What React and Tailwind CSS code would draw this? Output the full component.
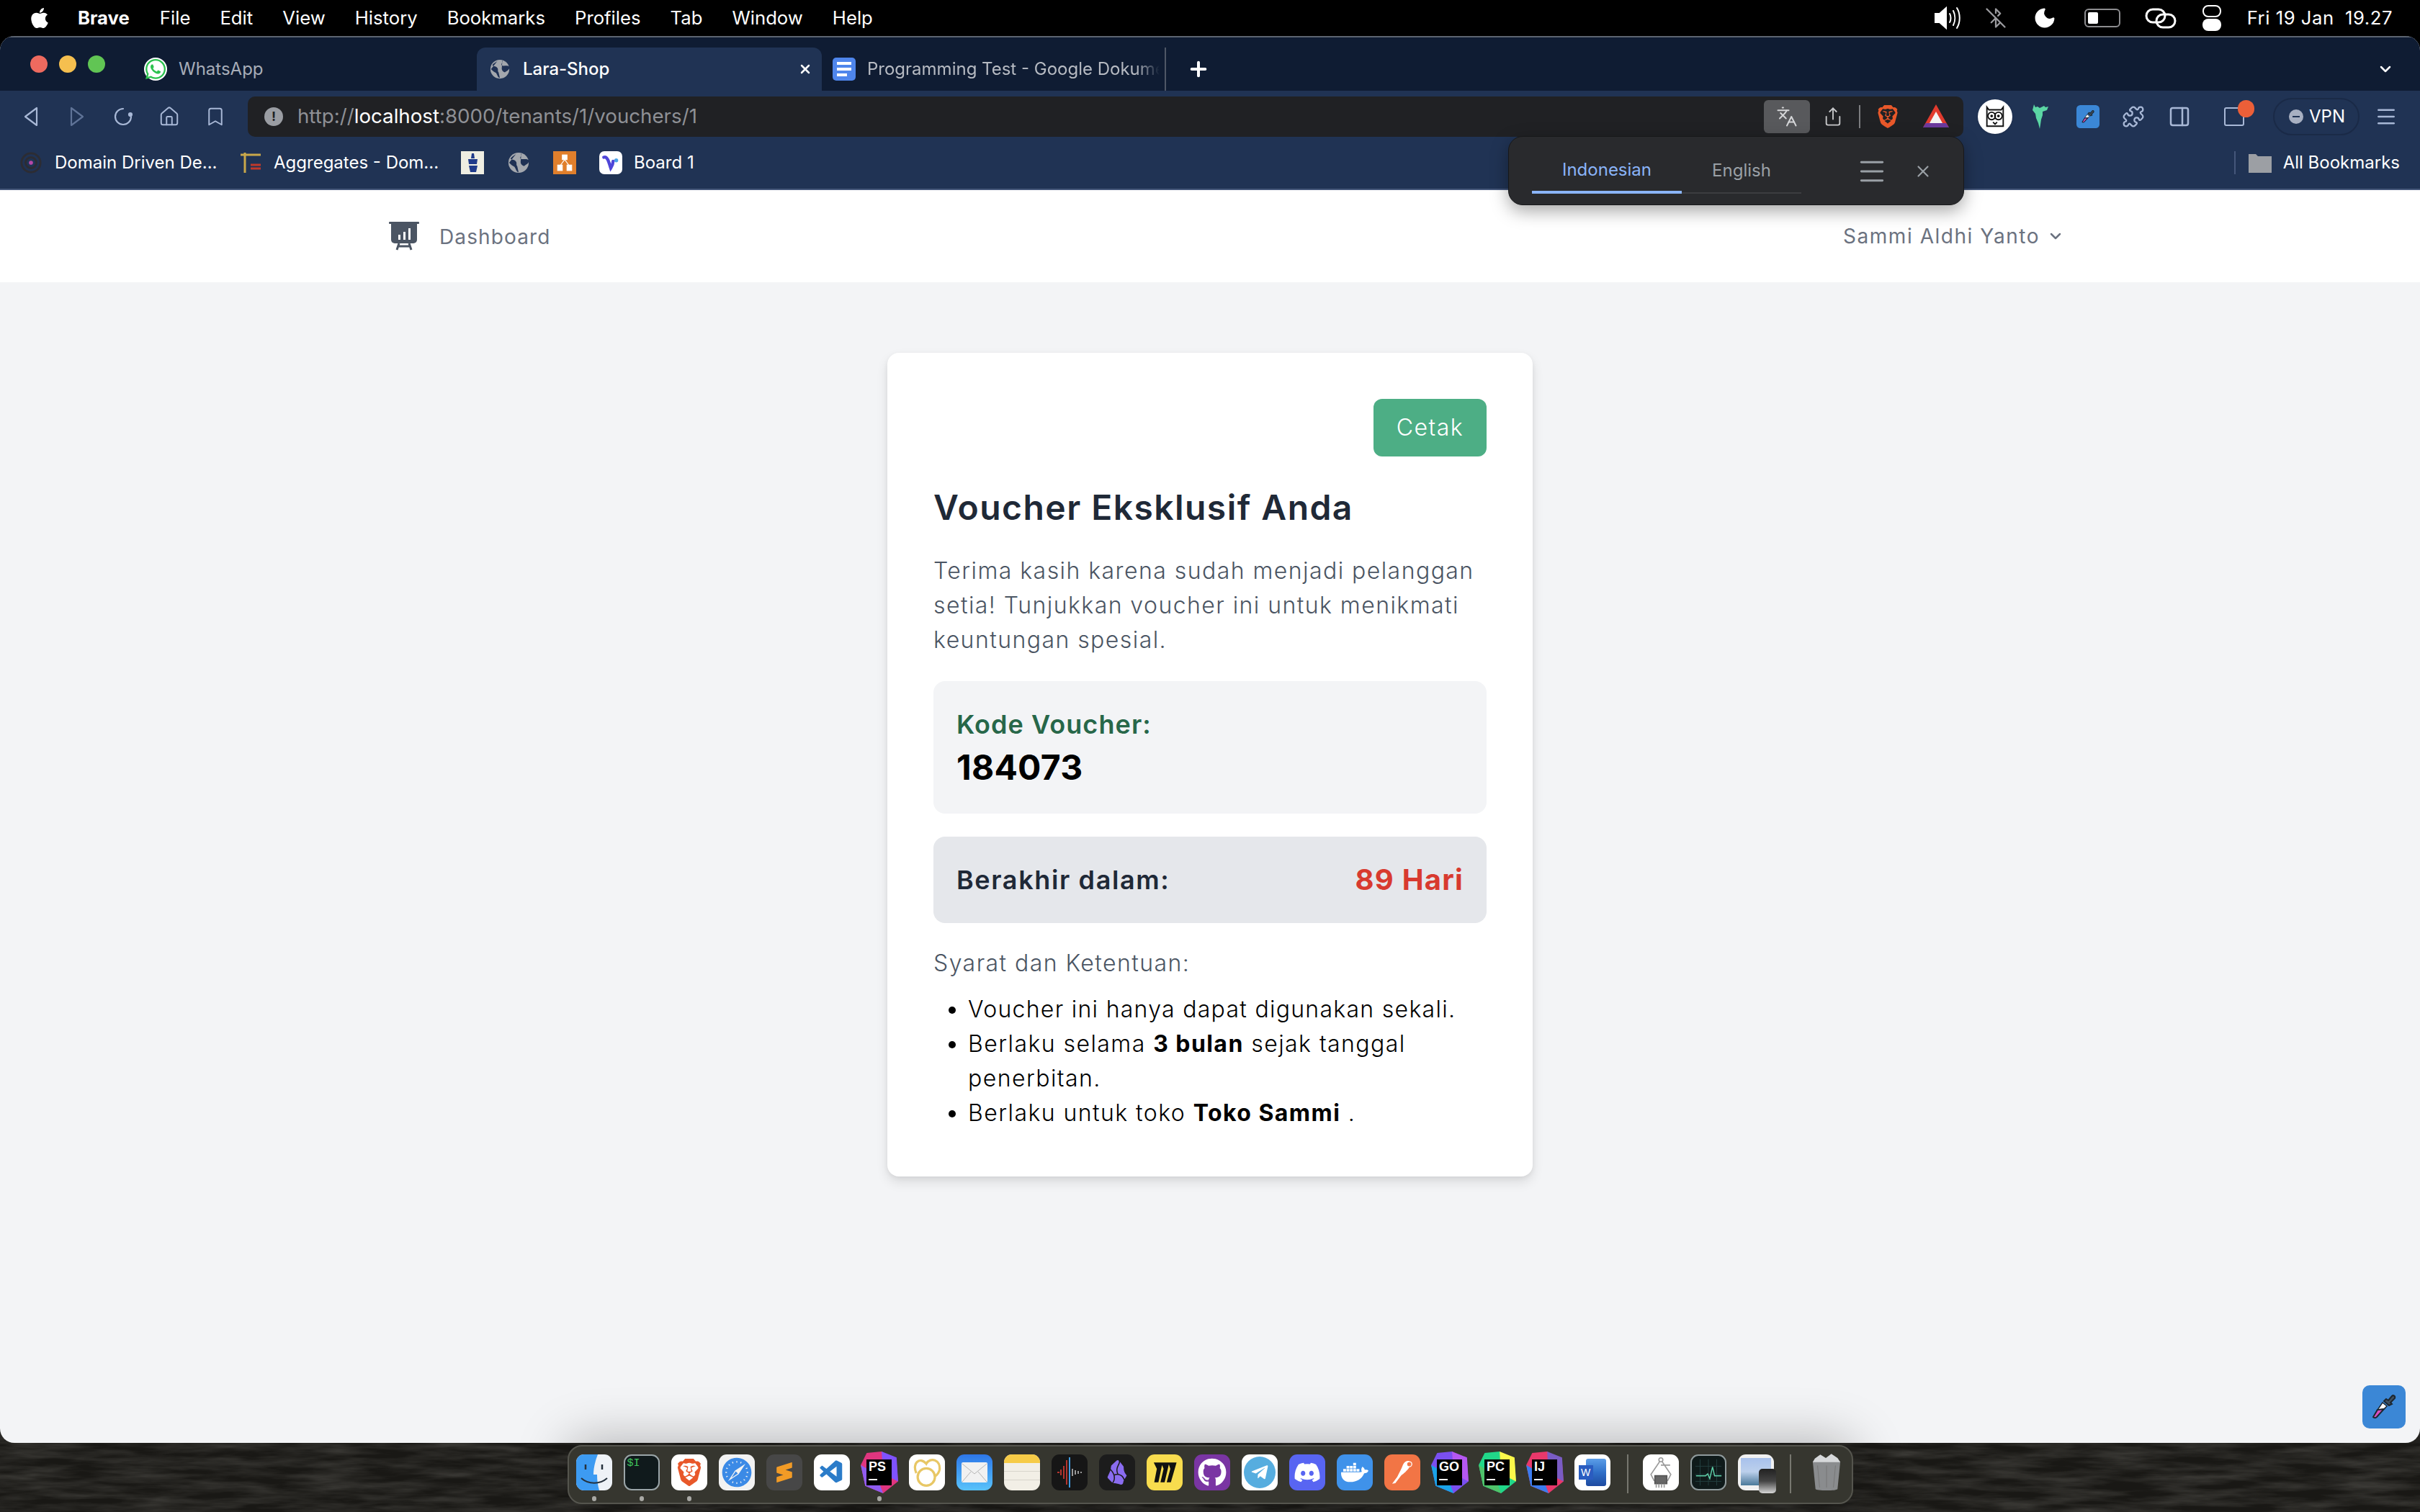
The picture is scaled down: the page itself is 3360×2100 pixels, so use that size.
import React from "react";
import { FaApple, FaWhatsapp, FaSafari, FaGithub, FaDiscord, FaDocker, FaTelegramPlane } from "react-icons/fa";
import { SiBrave, SiSublimetext, SiObsidian } from "react-icons/si";
import { VscVscode } from "react-icons/vsc";
import { ChevronDown, X, Plus, Languages, Share, PanelRight, Puzzle, Menu, BluetoothOff, Moon, Home, Bookmark } from "lucide-react";

const menuItems = ["File", "Edit", "View", "History", "Bookmarks", "Profiles", "Tab", "Window", "Help"];

const GlobeIcon = ({ className }) => (
  <svg viewBox="0 0 32 32" className={className}>
    <circle cx="16" cy="16" r="15" fill="#a3a7ad" />
    <path d="M13 2c-2 3-7 4-9 8 3 2 6 1 8 4 2 2 0 5 2 7l2 9c-3 0-4-5-6-8-3-1-6-4-8-6M20 2c2 3-3 5-1 8 3 2 8-1 12 2 1 5-3 6-7 9-3-1-5-3-5-6" fill="#1f3154" />
  </svg>
);

const Dropper = ({ className }) => (
  <svg viewBox="0 0 60 60" className={className}>
    <rect width="60" height="60" rx="10" fill="#3b87d6" />
    <path d="M36 21l5-6c2-2 5 0 4 3l-6 6 2 2-4 2-7-6 3-3z" fill="#3f5060" stroke="#1d2730" strokeWidth="2" />
    <path d="M28 24l6 5-4 4-9 1z" fill="#fff" stroke="#1d2730" strokeWidth="1.5" />
    <path d="M21 34l9-1-10 11c-2 2-4 1-5 0z" fill="#d94fc0" stroke="#1d2730" strokeWidth="2" />
  </svg>
);

const Tile = ({ bg, children }) => (
  <div className={`w-[50px] h-[50px] rounded-[11px] flex items-center justify-center overflow-hidden ${bg}`}>{children}</div>
);

const JetBrains = ({ label, colors }) => (
  <div className="w-[50px] h-[50px] relative flex items-center justify-center">
    <svg viewBox="0 0 50 56" className="absolute w-[54px] h-[58px]">
      <polygon points="8,2 28,0 48,14 50,40 30,56 6,46 0,18" fill={colors[0]} />
      <polygon points="28,0 48,8 50,40 30,30" fill={colors[1]} />
      <polygon points="0,18 20,30 30,56 6,46" fill={colors[2]} />
    </svg>
    <div className="relative w-[35px] h-[36px] bg-black text-white font-bold text-[18px] leading-[20px] pl-[3px] font-['Liberation_Sans',sans-serif]">
      {label}
      <div className="w-[12px] h-[2px] bg-white mt-[7px]" />
    </div>
  </div>
);

const dockApps = [
  { name: "finder", dot: true, node: (
    <div className="w-[50px] h-[50px] rounded-[11px] overflow-hidden relative bg-[#eef2f7]">
      <svg viewBox="0 0 50 50" className="w-full h-full">
        <path d="M0 0h30c-4 10-6 20-6 28h5c0 8 1 15 3 22H0z" fill="#3d9bf2" />
        <path d="M13 14v7M36 14v7" stroke="#26323d" strokeWidth="2.5" />
        <path d="M7 33c10 9 26 9 36 0" stroke="#26323d" strokeWidth="2" fill="none" />
      </svg>
    </div>
  ) },
  { name: "terminal", dot: true, node: (
    <div className="w-[50px] h-[50px] rounded-[11px] bg-[#101a1c] border-2 border-[#9aa5a8] text-[#3fc45c] text-[15px] font-['Liberation_Mono',monospace] pl-[3px] leading-[22px]">$I</div>
  ) },
  { name: "brave", dot: true, node: <Tile bg="bg-white"><SiBrave className="w-[38px] h-[42px] text-[#e8582a]" /></Tile> },
  { name: "safari", node: <Tile bg="bg-[#f2f2f2]"><FaSafari className="w-[42px] h-[42px] text-[#3b8ae6]" /></Tile> },
  { name: "sublime", node: <Tile bg="bg-[#474747]"><SiSublimetext className="w-[28px] h-[34px] text-[#f29b26]" /></Tile> },
  { name: "vscode", node: <Tile bg="bg-white"><VscVscode className="w-[38px] h-[38px] text-[#2b7cc9]" /></Tile> },
  { name: "phpstorm", dot: true, node: <JetBrains label="PS" colors={["#e0357f", "#7f52ff", "#8f5cf0"]} /> },
  { name: "navicat", node: (
    <Tile bg="bg-white">
      <svg viewBox="0 0 50 50" className="w-[46px] h-[46px]" fill="none" stroke="#e8c765" strokeWidth="3.5">
        <circle cx="24" cy="32" r="13" />
        <path d="M9 26C2 12 14 0 24 12c6-11 22-6 20 9-1 6-4 8-7 10" />
      </svg>
    </Tile>
  ) },
  { name: "mail", node: (
    <div className="w-[50px] h-[50px] rounded-[11px] bg-gradient-to-b from-[#2e76e8] to-[#5ac3fa] flex items-center justify-center">
      <svg viewBox="0 0 36 28" className="w-[36px] h-[28px]">
        <rect width="36" height="28" rx="2" fill="#f1f1f1" />
        <path d="M1 2l17 14L35 2M1 27l12-14M35 27L23 13" stroke="#b5b5b5" fill="none" />
      </svg>
    </div>
  ) },
  { name: "notes", node: (
    <div className="w-[50px] h-[50px] rounded-[11px] overflow-hidden bg-[#f2efe6] flex flex-col">
      <div className="h-[12px] bg-[#f6cb47]" />
      <div className="h-[1px] bg-[#d8d5cc] mt-[11px]" />
      <div className="h-[1px] bg-[#d8d5cc] mt-[11px]" />
    </div>
  ) },
  { name: "voice", node: (
    <Tile bg="bg-[#161616]">
      <svg viewBox="0 0 50 50" className="w-[50px] h-[50px]" strokeWidth="2">
        <path d="M8 25h3M13 21v8M17 16v18M21 8v34M25 14v22" stroke="#b5342e" />
        <path d="M29 20v10M33 22v6M37 23v4M41 24v2" stroke="#9a9a9a" />
        <path d="M25 4v42" stroke="#3f9be0" />
      </svg>
    </Tile>
  ) },
  { name: "obsidian", node: <Tile bg="bg-[#1c1c1c]"><SiObsidian className="w-[34px] h-[40px] text-[#8a6cf0]" /></Tile> },
  { name: "miro", node: (
    <Tile bg="bg-[#f8dc4e]">
      <svg viewBox="0 0 50 50" className="w-[36px] h-[36px]" fill="#111">
        <path d="M14 6h7l-8 38H5l5-26-6-12zM27 6h7l-9 38h-8l6-26-5-12zM41 6h7L37 44h-8l7-26-4-12z" />
      </svg>
    </Tile>
  ) },
  { name: "github", node: <Tile bg="bg-[#7a35a3]"><FaGithub className="w-[40px] h-[40px] text-white" /></Tile> },
  { name: "telegram", node: (
    <Tile bg="bg-white">
      <div className="w-[44px] h-[44px] rounded-full bg-[#56addf] flex items-center justify-center">
        <FaTelegramPlane className="w-[26px] h-[26px] text-white" />
      </div>
    </Tile>
  ) },
  { name: "discord", node: <Tile bg="bg-[#5865f2]"><FaDiscord className="w-[38px] h-[38px] text-white" /></Tile> },
  { name: "docker", node: <Tile bg="bg-[#3f92ea]"><FaDocker className="w-[38px] h-[38px] text-white" /></Tile> },
  { name: "postman", node: (
    <Tile bg="bg-[#f27545]">
      <svg viewBox="0 0 50 50" className="w-[44px] h-[44px]" fill="#fff">
        <path d="M9 43l5-1 9-12c4-3 10-8 13-13 2-4 2-9-1-10-4-1-7 2-9 6-2 6-6 13-9 19z" />
        <circle cx="36" cy="12" r="4" fill="#f27545" stroke="#fff" strokeWidth="1.5" />
      </svg>
    </Tile>
  ) },
  { name: "goland", node: <JetBrains label="GO" colors={["#7a4ff0", "#b557f2", "#1aa3e8"]} /> },
  { name: "pycharm", node: <JetBrains label="PC" colors={["#21d789", "#fcf84a", "#4fc36a"]} /> },
  { name: "intellij", node: <JetBrains label="IJ" colors={["#e8386b", "#7a5cc4", "#3b7cf0"]} /> },
  { name: "word", node: (
    <Tile bg="bg-white">
      <div className="relative w-[38px] h-[38px]">
        <div className="ml-[10px] w-[28px] h-[38px] rounded-[3px] bg-gradient-to-b from-[#5b9ee8] via-[#2f6fc8] to-[#1e4aa0]" />
        <div className="absolute left-0 top-[9px] w-[20px] h-[20px] bg-[#2a5cc0] text-white text-[14px] leading-[20px] text-center font-['Liberation_Sans',sans-serif]">W</div>
      </div>
    </Tile>
  ) },
];

const toolApps = [
  <Tile key="chip" bg="bg-white">
    <svg viewBox="0 0 50 50" className="w-[46px] h-[46px]" fill="none" stroke="#9a9a9a" strokeWidth="1.8">
      <circle cx="25" cy="6" r="3" />
      <path d="M23 9L10 28l5 10M27 9l13 19-5 10M25 14h14" />
      <rect x="16" y="30" width="18" height="12" fill="#666" stroke="#555" />
      <path d="M18 42v6M22 42v6M26 42v6M30 42v6" />
    </svg>
  </Tile>,
  <div key="monitor" className="w-[50px] h-[50px] rounded-[11px] bg-[#0f1a1a] border-2 border-[#8f9a9c] flex items-center justify-center">
    <svg viewBox="0 0 46 46" className="w-[44px] h-[44px]" fill="none">
      <path d="M11 4v38M23 4v38M35 4v38M4 14h38M4 26h38M4 36h38" stroke="#244040" />
      <path d="M5 28h14l3-3 3 7 4-17 3 13h10" stroke="#5fd0a8" strokeWidth="1.5" />
    </svg>
  </div>,
  <div key="preview" className="w-[50px] h-[50px] relative rounded-[11px] bg-[#f1f1f1] flex items-start justify-center pt-[5px]">
    <div className="w-[42px] h-[38px] bg-gradient-to-b from-[#a8c1ec] via-[#bcd0ec] to-[#4a7a9a]" />
    <div className="absolute right-[-3px] bottom-[-4px] w-[24px] h-[34px] rounded-[5px] bg-gradient-to-b from-[#222] via-[#444] to-[#d8d8d8]" />
  </div>,
];

const WindowControls = () => (
  <div className="w-[184px] flex items-center pl-[42px] gap-[16px] self-stretch">
    <div className="w-[24px] h-[24px] rounded-full bg-[#ee6a5f]" />
    <div className="w-[24px] h-[24px] rounded-full bg-[#f5bf4f]" />
    <div className="w-[24px] h-[24px] rounded-full bg-[#61c554]" />
  </div>
);

const TabStrip = () => (
  <div className="h-[76px] bg-[#0f1c33] flex items-end border-t-2 border-[#5c6470] shrink-0">
    <WindowControls />
    <div className="w-[478px] h-[60px] flex items-center pl-[16px] gap-[16px]">
      <div className="w-[32px] h-[32px] rounded-full bg-white flex items-center justify-center">
        <FaWhatsapp className="w-[32px] h-[32px] text-[#2dc24f]" />
      </div>
      <span className="text-[24px] text-[#a7adb8]">WhatsApp</span>
    </div>
    <div className="w-[479px] h-[60px] bg-[#203354] rounded-t-[12px] flex items-center pl-[18px] pr-[13px] gap-[18px]">
      <GlobeIcon className="w-[28px] h-[32px] shrink-0" />
      <span className="text-[24px] font-medium text-white whitespace-nowrap">Lara-Shop</span>
      <X className="w-[20px] h-[20px] text-white ml-auto shrink-0" strokeWidth={3} />
    </div>
    <div className="w-[478px] h-[60px] flex items-center pl-[15px] gap-[16px] border-r-2 border-[#4e5666]">
      <div className="w-[32px] h-[32px] rounded-[5px] bg-[#4f86ec] flex flex-col items-start justify-center gap-[4px] pl-[6px] shrink-0">
        <div className="w-[20px] h-[4px] bg-white" />
        <div className="w-[20px] h-[4px] bg-white" />
        <div className="w-[14px] h-[4px] bg-white" />
      </div>
      <span className="w-[406px] overflow-hidden whitespace-nowrap text-[24px] text-[#b6bac2] [mask-image:linear-gradient(to_right,black_92%,transparent)]">
        Programming Test - Google Dokumen
      </span>
    </div>
    <div className="h-[60px] flex items-center pl-[29px]">
      <Plus className="w-[32px] h-[32px] text-white" strokeWidth={3} />
    </div>
    <div className="h-[60px] flex items-center ml-auto pr-[36px]">
      <ChevronDown className="w-[24px] h-[24px] text-white" strokeWidth={2.5} />
    </div>
  </div>
);

const navStroke = { fill: "none", stroke: "#a8b8d6", strokeWidth: 2.2, strokeLinejoin: "round", strokeLinecap: "round" };

const Toolbar = () => (
  <div className="h-[72px] bg-[#203354] flex items-start pt-[8px] shrink-0">
    <div className="w-[344px] h-[56px] flex items-center pl-[21px] shrink-0">
      <div className="w-[44px] flex justify-center mr-[20px]">
        <svg viewBox="0 0 24 28" className="w-[24px] h-[28px]" {...navStroke}><path d="M20 2v24L4 14z" /></svg>
      </div>
      <div className="w-[44px] flex justify-center mr-[20px]">
        <svg viewBox="0 0 24 28" className="w-[24px] h-[28px]" {...navStroke} stroke="#5f7397"><path d="M4 2v24l16-12z" /></svg>
      </div>
      <div className="w-[44px] flex justify-center mr-[20px]">
        <svg viewBox="0 0 28 28" className="w-[28px] h-[28px]" {...navStroke}>
          <path d="M14 3a11 11 0 1 0 11 11" />
          <circle cx="24" cy="11" r="2" fill="#a8b8d6" />
        </svg>
      </div>
      <div className="w-[44px] flex justify-center mr-[20px]"><Home className="w-[30px] h-[30px] text-[#a8b8d6]" strokeWidth={1.6} /></div>
      <div className="w-[44px] flex justify-center"><Bookmark className="w-[30px] h-[30px] text-[#a8b8d6]" strokeWidth={1.6} /></div>
    </div>
    <div className="w-[2382px] h-[56px] bg-[#202124] rounded-[10px] flex items-center pl-[23px] pr-[20px] shrink-0">
      <div className="w-[26px] h-[26px] rounded-full bg-[#9a9da3] flex items-center justify-center text-[18px] font-bold leading-none text-[#202124]">!</div>
      <span className="ml-[20px] text-[27.7px] text-[#8e9095]">
        http://<span className="text-white">localhost</span>:8000/tenants/1/vouchers/1
      </span>
      <div className="ml-auto w-[64px] h-[46px] rounded-[6px] bg-[#58595c] flex items-center justify-center">
        <Languages className="w-[30px] h-[30px] text-[#d5d6d8]" strokeWidth={1.6} />
      </div>
      <Share className="w-[28px] h-[30px] text-[#c9cacc] ml-[18px]" strokeWidth={1.6} />
      <div className="w-[2px] h-[32px] bg-[#7c7d80] ml-[22px]" />
      <SiBrave className="w-[32px] h-[36px] text-[#e8582a] ml-[22px]" />
      <svg viewBox="0 0 36 34" className="w-[36px] h-[34px] ml-[33px]">
        <polygon points="18,0 36,32 0,32" fill="#e23b2e" />
        <polygon points="18,10 27,26 9,26" fill="#f4f4f4" />
        <polygon points="4,26 32,26 36,32 0,32" fill="#6b3a9e" />
      </svg>
    </div>
    <div className="flex items-center h-[56px] grow">
      <div className="ml-[20px] w-[48px] h-[48px] rounded-full bg-white flex items-center justify-center shadow-sm">
        <svg viewBox="0 0 36 36" className="w-[34px] h-[34px]" fill="none" stroke="#111" strokeWidth="2">
          <path d="M6 4l3 4h18l3-4v28H6z" />
          <circle cx="13" cy="17" r="5.5" />
          <circle cx="23" cy="17" r="5.5" />
          <circle cx="13" cy="17" r="1" fill="#111" />
          <circle cx="23" cy="17" r="1" fill="#111" />
          <path d="M15 26l3 3 3-3" />
        </svg>
      </div>
      <svg viewBox="0 0 28 36" className="w-[28px] h-[36px] ml-[25px]" fill="#5bd6a4">
        <path d="M5 1l2 4 3-1 3 2 6-3 2 2 4-1-2 5-6 2 0 5-2 6-1 7-1 6-2-8-3-7-1-6-4-5z" />
      </svg>
      <Dropper className="w-[32px] h-[32px] ml-[36px]" />
      <Puzzle className="w-[32px] h-[34px] text-[#a8b8d6] ml-[31px]" strokeWidth={1.7} />
      <PanelRight className="w-[32px] h-[34px] text-[#a8b8d6] ml-[32px]" strokeWidth={1.9} />
      <div className="relative ml-[46px] w-[28px] h-[26px] rounded-[3px] border-2 border-[#a8b8d6]">
        <div className="absolute -top-[12px] -right-[16px] w-[23px] h-[24px] rounded-full bg-[#eb5f38]" />
      </div>
      <div className="ml-[40px] w-[120px] h-[52px] rounded-full border-2 border-[#1a2a47] bg-[#203354] flex items-center pl-[20px] gap-[8px] shrink-0">
        <div className="w-[20px] h-[20px] rounded-full bg-[#a8b0c2] flex items-center justify-center">
          <div className="w-[10px] h-[2px] bg-[#203354]" />
        </div>
        <span className="text-[24px] text-white">VPN</span>
      </div>
      <Menu className="w-[32px] h-[32px] text-[#a8b8d6] ml-[21px] shrink-0" strokeWidth={1.9} />
    </div>
  </div>
);

const BookmarksBar = () => (
  <div className="h-[66px] bg-[#203354] border-b-2 border-[#45577a] flex items-center pl-[28px] pb-[8px] text-[24px] text-white shrink-0">
    <svg viewBox="0 0 32 32" className="w-[30px] h-[32px]" fill="none" stroke="#2c2c33" strokeWidth="3">
      <circle cx="16" cy="16" r="14" />
      <circle cx="16" cy="16" r="8" />
      <circle cx="16" cy="16" r="3" fill="#b648a8" stroke="none" />
    </svg>
    <span className="ml-[18px] w-[256px] whitespace-nowrap">Domain Driven De...</span>
    <svg viewBox="0 0 32 32" className="w-[32px] h-[32px]" fill="none">
      <path d="M2 5h28M8 2v28" stroke="#c9a84a" strokeWidth="3" />
      <path d="M16 19h14M16 24h14" stroke="#c0392b" strokeWidth="3" />
    </svg>
    <span className="ml-[16px] w-[260px] whitespace-nowrap">Aggregates - Dom...</span>
    <div className="w-[32px] h-[32px] bg-[#efeee2] flex items-center justify-center">
      <svg viewBox="0 0 20 28" className="w-[20px] h-[28px]" fill="#1f3a8a">
        <path d="M9 1h3l1 7H8zM4 9h13l-1 7H5zM5 18h12l-2 9H7z" />
      </svg>
    </div>
    <GlobeIcon className="w-[30px] h-[32px] ml-[33px]" />
    <div className="w-[32px] h-[32px] ml-[33px] bg-[#e07f2c] flex items-center justify-center">
      <svg viewBox="0 0 24 24" className="w-[26px] h-[26px]" fill="#fff" stroke="#fff">
        <rect x="9" y="2" width="6" height="6" />
        <rect x="3" y="15" width="6" height="7" />
        <rect x="15" y="15" width="6" height="7" />
        <path d="M12 8l-6 8M12 8l6 8" fill="none" />
      </svg>
    </div>
    <div className="w-[32px] h-[32px] ml-[32px] bg-white rounded-[7px] flex items-center justify-center">
      <svg viewBox="0 0 24 24" className="w-[26px] h-[26px]" fill="none">
        <path d="M3 5c5-2 7 8 9 14 2-3 3-6 3-9" stroke="#4f46d8" strokeWidth="4" strokeLinecap="round" />
        <circle cx="19" cy="9" r="2.5" fill="#4aa3e8" />
      </svg>
    </div>
    <span className="ml-[16px]">Board 1</span>
    <div className="ml-auto w-[2px] h-[32px] bg-[#45577a]" />
    <svg viewBox="0 0 32 28" className="w-[32px] h-[28px] ml-[18px]">
      <path d="M0 2h10l3 3h19v23H0z" fill="#9c9fa4" />
    </svg>
    <span className="ml-[16px] mr-[28px]">All Bookmarks</span>
  </div>
);

const TranslatePopup = () => (
  <div className="absolute left-[2094px] top-[139px] w-[633px] h-[96px] bg-[#292a2d] rounded-[20px] border border-[#17181a] shadow-[0_8px_24px_rgba(0,0,0,0.35)] flex items-start pl-[32px] text-[24px] z-10">
    <div className="w-[208px] h-[79px] pt-[16px] border-b-4 border-[#8ab4f8] flex items-center justify-center text-[#8ab4f8]">Indonesian</div>
    <div className="w-[166px] h-[77px] pt-[14px] mt-[2px] border-b-2 border-[#3c3d40] flex items-center justify-center text-[#9aa0a6]">English</div>
    <div className="h-[79px] pt-[16px] flex items-center ml-[76px]">
      <Menu className="w-[44px] h-[44px] text-[#9aa0a6]" strokeWidth={1.6} />
    </div>
    <div className="h-[79px] pt-[16px] flex items-center ml-[36px]">
      <X className="w-[26px] h-[26px] text-[#9aa0a6]" strokeWidth={2} />
    </div>
  </div>
);

const VoucherCard = () => (
  <div className="w-[896px] bg-white rounded-[16px] p-[64px] shadow-[0_8px_16px_rgba(0,0,0,0.1),0_2px_6px_rgba(0,0,0,0.06)] text-[32px] leading-[48px] tracking-[0.045em]">
    <div className="flex justify-end">
      <button className="w-[157px] h-[80px] rounded-[12px] bg-[#4dae85] text-white font-light">Cetak</button>
    </div>
    <h1 className="mt-[39px] text-[48px] leading-[64px] font-semibold text-[#1f2937] tracking-[0.03em]">Voucher Eksklusif Anda</h1>
    <p className="mt-[32px] text-[#4b5563] font-light">
      Terima kasih karena sudah menjadi pelanggan setia! Tunjukkan voucher ini untuk menikmati keuntungan spesial.
    </p>
    <div className="mt-[33px] bg-[#f3f4f6] rounded-[16px] p-[32px]">
      <div className="text-[36px] leading-[56px] font-semibold text-[#276749] tracking-[0.03em]">Kode Voucher:</div>
      <div className="text-[48px] leading-[64px] font-bold text-black tracking-[0.005em]">184073</div>
    </div>
    <div className="mt-[32px] h-[120px] bg-[#e5e7eb] rounded-[16px] px-[32px] flex items-center justify-between text-[36px] font-semibold">
      <span className="text-[#1f2937] tracking-[0.045em]">Berakhir dalam:</span>
      <span className="text-[40px] font-bold text-[#d83a2f] tracking-[0.03em]">89 Hari</span>
    </div>
    <div className="mt-[32px] text-[#4b5563] font-light">Syarat dan Ketentuan:</div>
    <ul className="mt-[16px] list-disc pl-[48px] text-black font-light">
      <li className="tracking-[0.04em]">Voucher ini hanya dapat digunakan sekali.</li>
      <li>
        Berlaku selama <strong className="font-bold">3 bulan</strong> sejak tanggal penerbitan.
      </li>
      <li>
        Berlaku untuk toko <strong className="font-bold">Toko Sammi</strong> .
      </li>
    </ul>
  </div>
);

const PageNav = () => (
  <div className="h-[128px] bg-white flex items-center justify-between pl-[540px] pr-[494px] text-[28px] text-[#6b7280] tracking-[0.04em] shrink-0">
    <div className="flex items-center gap-[28px]">
      <svg viewBox="0 0 42 40" className="w-[42px] h-[40px]" fill="#4b5563">
        <rect width="42" height="3" rx="1" />
        <path d="M3 3h36v22a5 5 0 0 1-5 5H8a5 5 0 0 1-5-5z" />
        <path d="M14 30l-3 9M28 30l3 9M12 34h18" stroke="#4b5563" strokeWidth="3" />
        <rect x="13" y="18" width="3" height="7" fill="#fff" />
        <rect x="20" y="14" width="3" height="11" fill="#fff" />
        <rect x="27" y="9" width="3" height="16" fill="#fff" />
      </svg>
      <span className="mt-[2px]">Dashboard</span>
    </div>
    <div className="flex items-center gap-[10px]">
      <span className="tracking-[0.055em]">Sammi Aldhi Yanto</span>
      <ChevronDown className="w-[24px] h-[24px]" strokeWidth={2.5} />
    </div>
  </div>
);

const Dock = () => (
  <div className="h-[96px] flex justify-center pt-[3px] shrink-0 relative z-10">
    <div className="w-[1785px] h-[82px] rounded-[20px] bg-[#36362f] border-2 border-[#55554e] shadow-[0_-6px_70px_rgba(0,0,0,0.28)] flex pl-[10px] pt-[11px]">
      <div className="flex gap-[16px]">
        {dockApps.map((app) => (
          <div key={app.name} className="w-[50px] flex flex-col items-center">
            {app.node}
            {app.dot && <div className="w-[6px] h-[7px] rounded-full bg-[#a8a8a4] mt-[8px]" />}
          </div>
        ))}
      </div>
      <div className="w-[2px] h-[54px] bg-[#77776f] ml-[23px] mr-[20px]" />
      <div className="flex gap-[16px]">{toolApps}</div>
      <div className="w-[2px] h-[54px] bg-[#77776f] ml-[22px] mr-[27px]" />
      <svg viewBox="0 0 46 56" className="w-[44px] h-[56px] -mt-[3px]">
        <path d="M3 12h40l-4 40c-1 3-31 3-32 0z" fill="#8a8c8e" />
        <path d="M6 8l8-6 8 5 8-6 9 6 4 6H3z" fill="#d6d8da" />
        <path d="M10 18l3 32M23 18v32M36 18l-3 32" stroke="#777" fill="none" />
      </svg>
    </div>
  </div>
);

export default function App() {
  return (
    <div className="w-[3360px] h-[2100px] relative overflow-hidden flex flex-col bg-black font-[Inter,sans-serif]">
      {/* wallpaper, only visible around the dock and window corners */}
      <svg className="absolute left-0 bottom-0 w-[3360px] h-[130px]">
        <filter id="rock">
          <feTurbulence type="fractalNoise" baseFrequency="0.012 0.09" numOctaves="4" seed="7" />
          <feColorMatrix values="0 0 0 0 0.16 0 0 0 0 0.155 0 0 0 0 0.14 0.7 0 0 0 -0.22" />
        </filter>
        <rect width="3360" height="130" fill="#191815" />
        <rect width="3360" height="130" filter="url(#rock)" />
      </svg>

      <div className="h-[50px] relative flex items-center pl-[41px] text-[25.7px] text-white shrink-0">
        <FaApple className="w-[28px] h-[32px]" />
        <span className="ml-[39px] font-bold">Brave</span>
        <div className="flex ml-[42px] gap-[41px] font-normal">
          {menuItems.map((item) => (
            <span key={item}>{item}</span>
          ))}
        </div>
        <div className="ml-auto flex items-center pr-[38px]">
          <svg viewBox="0 0 38 34" className="w-[38px] h-[34px]" fill="none" stroke="white" strokeWidth="2" strokeLinecap="round">
            <path d="M2 11h6l9-8v28l-9-8H2z" fill="white" />
            <path d="M22 11c2 3 2 9 0 12M27 7c3 6 3 14 0 20M32 3c5 8 5 20 0 28" />
          </svg>
          <BluetoothOff className="w-[30px] h-[32px] ml-[33px] text-[#9b9b9f]" strokeWidth={1.8} />
          <Moon className="w-[34px] h-[34px] ml-[36px]" fill="white" strokeWidth={1} />
          <div className="w-[50px] h-[26px] ml-[38px] rounded-[6px] border-2 border-[#8d8d90] p-[3px]">
            <div className="w-[14px] h-full rounded-[2px] bg-white" />
          </div>
          <svg viewBox="0 0 44 36" className="w-[44px] h-[36px] ml-[34px]" fill="none" stroke="white" strokeWidth="3">
            <rect x="2" y="6" width="26" height="18" rx="9" />
            <rect x="16" y="13" width="26" height="18" rx="9" />
          </svg>
          <div className="w-[26px] h-[36px] ml-[36px] flex flex-col gap-[2px]">
            <div className="h-[17px] rounded-[8px] border-2 border-white" />
            <div className="h-[17px] rounded-[8px] bg-white" />
          </div>
          <span className="ml-[36px] whitespace-pre tracking-[0.02em]">Fri 19 Jan  19.27</span>
        </div>
      </div>

      <div className="flex-1 relative flex flex-col">
        <div className="flex-1 rounded-[20px] overflow-hidden flex flex-col bg-[#f3f4f6]">
          <TabStrip />
          <Toolbar />
          <BookmarksBar />
          <PageNav />
          <main className="flex-1 flex justify-center items-start pt-[98px] relative">
            <VoucherCard />
            <Dropper className="absolute right-[20px] bottom-[20px] w-[60px] h-[60px]" />
          </main>
        </div>
        <TranslatePopup />
      </div>

      <Dock />
    </div>
  );
}
